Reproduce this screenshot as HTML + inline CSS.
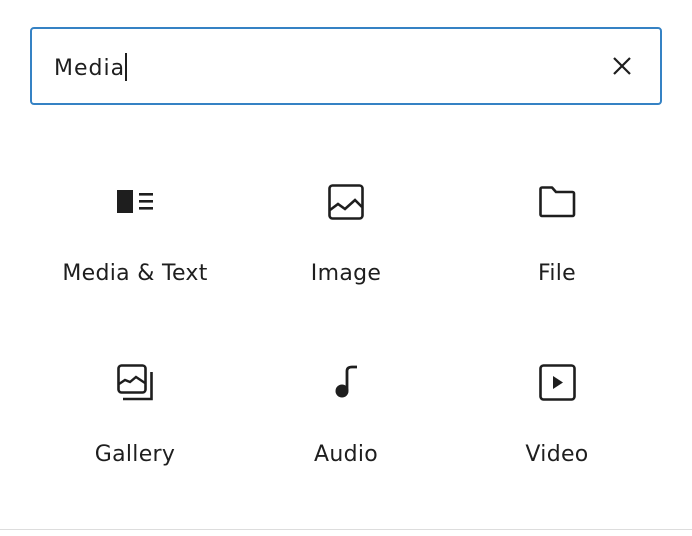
<!DOCTYPE html>
<html><head><style>
body{margin:0;width:692px;height:536px;background:#fff;font-family:"DejaVu Sans",sans-serif;color:#1e1e1e;position:relative;overflow:hidden}
.box{position:absolute;left:30px;top:27px;width:628px;height:74px;border:2px solid #3582c4;border-radius:4px}
.box span{position:absolute;left:22px;top:24px;font-size:22px;letter-spacing:1px}
.caret{display:inline-block;width:1.5px;height:28px;background:#1e1e1e;vertical-align:-6px;margin-left:0px}
.lbl{position:absolute;width:220px;text-align:center;font-size:22px;letter-spacing:0.3px}
svg{position:absolute}
.line{position:absolute;left:0;right:0;top:529px;height:1px;background:#ddd}
</style></head><body>
<div class="box"><span>Media<i class="caret"></i></span></div>
<svg style="left:610px;top:54px" width="24" height="24" viewBox="0 0 24 24"><path d="M4 4L20 20M20 4L4 20" stroke="#1e1e1e" stroke-width="2.2"/></svg>

<svg style="left:117px;top:190px" width="38" height="24" viewBox="0 0 38 24"><rect x="0" y="0" width="16" height="23" fill="#1e1e1e"/><rect x="22" y="3" width="14" height="2.6" fill="#1e1e1e"/><rect x="22" y="10" width="14" height="2.6" fill="#1e1e1e"/><rect x="22" y="17" width="14" height="2.6" fill="#1e1e1e"/></svg>
<svg style="left:328px;top:184px" width="37" height="36" viewBox="0 0 37 36"><rect x="1.5" y="1.5" width="33" height="33" rx="3" fill="none" stroke="#1e1e1e" stroke-width="2.6"/><path d="M2 26L10 20L17 25L27 16L34 23" fill="none" stroke="#1e1e1e" stroke-width="2.6"/></svg>
<svg style="left:539px;top:186px" width="37" height="32" viewBox="0 0 37 32"><path d="M3 1.5H13L17 6H33.5A1.5 1.5 0 0 1 35 7.5V28.5A1.5 1.5 0 0 1 33.5 30H3A1.5 1.5 0 0 1 1.5 28.5V3A1.5 1.5 0 0 1 3 1.5Z" fill="none" stroke="#1e1e1e" stroke-width="2.6" stroke-linejoin="round"/></svg>

<svg style="left:117px;top:364px" width="38" height="38" viewBox="0 0 38 38"><rect x="1.5" y="1.5" width="27" height="27" rx="3" fill="none" stroke="#1e1e1e" stroke-width="2.6"/><path d="M2 20L8 16L13 18L19 13L28 19" fill="none" stroke="#1e1e1e" stroke-width="2.4"/><path d="M6 35H34.5V8" fill="none" stroke="#1e1e1e" stroke-width="2.6"/></svg>
<svg style="left:334px;top:365px" width="26" height="35" viewBox="0 0 26 35"><circle cx="8" cy="26" r="6.5" fill="#1e1e1e"/><path d="M13 26V6Q13 2 18 2H23" fill="none" stroke="#1e1e1e" stroke-width="2.8"/></svg>
<svg style="left:539px;top:364px" width="37" height="37" viewBox="0 0 37 37"><rect x="1.5" y="1.5" width="34" height="34" rx="3" fill="none" stroke="#1e1e1e" stroke-width="2.6"/><path d="M14 12V25L24 18.5Z" fill="#1e1e1e"/></svg>

<div class="lbl" style="left:25px;top:261px">Media &amp; Text</div>
<div class="lbl" style="left:236px;top:261px">Image</div>
<div class="lbl" style="left:447px;top:261px">File</div>
<div class="lbl" style="left:25px;top:442px">Gallery</div>
<div class="lbl" style="left:236px;top:442px">Audio</div>
<div class="lbl" style="left:447px;top:442px">Video</div>
<div class="line"></div>
</body></html>
